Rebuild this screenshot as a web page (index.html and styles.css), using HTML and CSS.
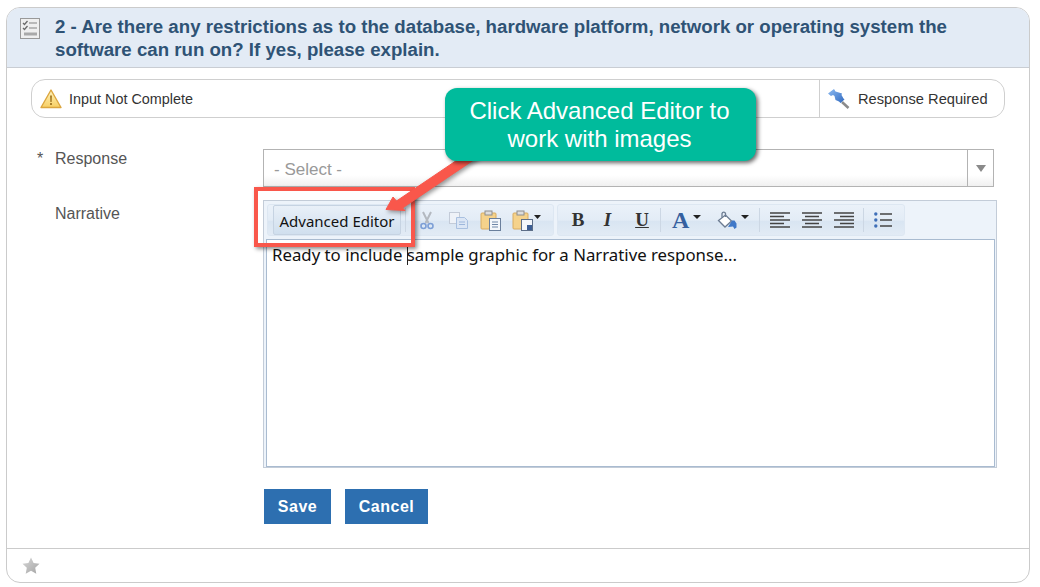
FILE: index.html
```html
<!DOCTYPE html>
<html lang="en">
<head>
<meta charset="utf-8">
<title>Question 2</title>
<link rel="stylesheet" href="styles.css">
</head>
<body>
<div class="page">
  <section class="card">
    <header class="card-head">
      <svg class="head-icon" width="20" height="21" viewBox="0 0 20 21">
        <rect x=".5" y=".5" width="19" height="20" fill="#efefef" stroke="#999"/>
        <path d="M3 5l1.500 1.500L7.500 3M3 10l1.500 1.500L7.500 8" fill="none" stroke="#6a6a6a" stroke-width="1.300"/>
        <path d="M9 5h8M9 10h8" stroke="#a8a8a8" stroke-width="1.500"/>
        <rect x="4" y="14.500" width="13" height="3" fill="#a9a9a9"/>
      </svg>
      <h1 class="title">2 - Are there any restrictions as to the database, hardware platform, network or operating system the software can run on? If yes, please explain.</h1>
    </header>

    <div class="status">
      <div class="status-left">
        <svg width="22" height="20" viewBox="0 0 22 20">
          <defs><linearGradient id="warn" x1="0" y1="0" x2="0" y2="1"><stop offset="0" stop-color="#fff3bd"/><stop offset="1" stop-color="#f7cf64"/></linearGradient></defs>
          <path d="M11 1L21 18.500H1z" fill="url(#warn)" stroke="#dca63f" stroke-width="1.400" stroke-linejoin="round"/>
          <path d="M10 6.500h2l-.3 6.500h-1.400z" fill="#a9802c"/><rect x="10" y="14" width="2" height="2" fill="#a9802c"/>
        </svg>
        <span>Input Not Complete</span>
      </div>
      <div class="status-right">
        <svg width="23" height="21" viewBox="0 0 23 21">
          <defs><linearGradient id="pin" x1="0" y1="0" x2="1" y2="1"><stop offset="0" stop-color="#8fbcf2"/><stop offset="1" stop-color="#2f69c0"/></linearGradient></defs>
          <path d="M15 14l6.500 6" stroke="#8b8b8b" stroke-width="2.600"/>
          <path d="M1 5.500L7 1l1.500 2.500 5 1.500 1.500 .5-.5 1.500 2 3.500 1 1-4 3.500-1.500-1.500-3.500-1.500-1-4-1.500-1-2 1z" fill="url(#pin)"/>
        </svg>
        <span>Response Required</span>
      </div>
    </div>

    <div class="form">
      <div class="row row-response">
        <span class="req">*</span>
        <span class="label">Response</span>
        <div class="select">
          <span class="select-text">- Select -</span>
          <span class="select-btn"><i class="tri"></i></span>
        </div>
      </div>
      <div class="row row-narrative">
        <span class="req"></span>
        <span class="label">Narrative</span>
        <div class="editor">
          <div class="toolbar">
            <div class="tool-group group-a">
              <span class="adv">Advanced Editor</span>
              <i class="sep"></i>
              <span class="tool t-first">
                <svg width="14" height="19" viewBox="0 0 14 19"><path d="M3 1l5.500 11M11 1L5.500 12" stroke="#b4b9c0" stroke-width="2" fill="none"/><circle cx="3.500" cy="15" r="2.500" fill="none" stroke="#7d9fd6" stroke-width="1.600"/><circle cx="10.500" cy="15" r="2.500" fill="none" stroke="#7d9fd6" stroke-width="1.600"/></svg>
              </span>
              <span class="tool">
                <svg width="20" height="17" viewBox="0 0 20 17"><rect x=".5" y=".5" width="10" height="11" fill="#eef2f8" stroke="#c3cbd8"/><path d="M7.500 5.500h8l3 3v8h-11z" fill="#dbe6f5" stroke="#a9c0e0"/><path d="M10 10h6M10 12.500h6" stroke="#9db7dc"/></svg>
              </span>
              <span class="tool">
                <svg width="22" height="21" viewBox="0 0 22 21"><rect x="1" y="3" width="15" height="16" rx="1" fill="#f5d28b" stroke="#d8ac62"/><rect x="5" y="1" width="7" height="4" fill="#ddd" stroke="#8e8e8e"/><rect x="9.500" y="8.500" width="11" height="12" fill="#f4f7fb" stroke="#6a7f9c"/><path d="M12 12h6M12 14.500h6M12 17h6" stroke="#6f87a8"/></svg>
              </span>
              <span class="tool tool-wide">
                <svg width="30" height="21" viewBox="0 0 30 21"><rect x="1" y="3" width="15" height="16" rx="1" fill="#f5d28b" stroke="#d8ac62"/><rect x="5" y="1" width="7" height="4" fill="#ddd" stroke="#8e8e8e"/><rect x="9.500" y="9.500" width="11" height="11" fill="#f4f7fb" stroke="#5d6e88"/><path d="M15 15h5v5h-5z" fill="#3d5f94"/><path d="M22 5h7l-3.500 4z" fill="#222"/></svg>
              </span>
            </div>
            <div class="tool-group group-b">
              <span class="tool glyph g-bold">B</span>
              <span class="tool glyph g-ital">I</span>
              <span class="tool glyph g-under">U</span>
              <i class="sep"></i>
              <span class="tool tool-color">
                <span class="g-color">A</span><i class="caret"></i>
              </span>
              <span class="tool tool-fill">
                <svg width="20" height="18" viewBox="0 0 20 18"><path d="M1.500 9.500L8.500 4l6 6-6.500 6z" fill="#fff" stroke="#6c7c92" stroke-width="1.300"/><path d="M5 6.500V2.500a1.800 1.800 0 0 1 3.500 0V6" fill="none" stroke="#6c7c92" stroke-width="1.300"/><path d="M11 16l4-6.500h2.500l2 3v4l-2 1.500-1.500-2.500z" fill="#3f78c8"/></svg>
                <i class="caret"></i>
              </span>
              <i class="sep"></i>
              <span class="tool align a-first">
                <svg width="20" height="16" viewBox="0 0 20 16"><path d="M0 1h20M0 4.500h14M0 8h20M0 11.500h14M0 15h20" stroke="#444" stroke-width="1.600"/></svg>
              </span>
              <span class="tool align">
                <svg width="20" height="16" viewBox="0 0 20 16"><path d="M0 1h20M3 4.500h14M0 8h20M3 11.500h14M0 15h20" stroke="#444" stroke-width="1.600"/></svg>
              </span>
              <span class="tool align">
                <svg width="20" height="16" viewBox="0 0 20 16"><path d="M0 1h20M6 4.500h14M0 8h20M6 11.500h14M0 15h20" stroke="#444" stroke-width="1.600"/></svg>
              </span>
              <i class="sep sep-c"></i>
              <span class="tool list">
                <svg width="18" height="16" viewBox="0 0 18 16"><path d="M6 2h12M6 8h12M6 14h12" stroke="#444" stroke-width="1.600"/><circle cx="1.800" cy="2" r="1.700" fill="#3f6fb8"/><circle cx="1.800" cy="8" r="1.700" fill="#3f6fb8"/><circle cx="1.800" cy="14" r="1.700" fill="#3f6fb8"/></svg>
              </span>
            </div>
          </div>
          <div class="edit-area">Ready to include <span class="cursor"></span>sample graphic for a Narrative response...</div>
        </div>
      </div>
      <div class="actions">
        <button class="btn btn-save" type="button">Save</button>
        <button class="btn btn-cancel" type="button">Cancel</button>
      </div>
    </div>

    <footer class="card-foot">
      <svg width="18" height="17" viewBox="0 0 18 17">
        <defs><linearGradient id="star" x1="0" y1="0" x2="1" y2="1"><stop offset="0" stop-color="#d8d8d8"/><stop offset="1" stop-color="#a4a4a4"/></linearGradient></defs>
        <path d="M9 .5l2.600 5.400 5.900.8-4.300 4.100 1.100 5.900L9 13.800l-5.300 2.900 1.100-5.900L.5 6.700l5.900-.8z" fill="url(#star)"/>
      </svg>
    </footer>
  </section>

  <div class="highlight"></div>
  <svg class="arrow" width="110" height="70" viewBox="0 0 110 70">
    <path d="M8 59.500L15 47 18.500 51 94 0 100 7 24.500 58 27 60.500z" fill="#f9574b" stroke="#f9574b" stroke-width="1" stroke-linejoin="round"/>
  </svg>
  <div class="callout">Click Advanced Editor to work with images</div>
</div>
</body>
</html>
```
FILE: styles.css
```css
* { box-sizing: border-box; }
html, body { margin: 0; padding: 0; background: #fff; }
body { font-family: "Liberation Sans", Arial, sans-serif; color: #555; overflow: hidden; }
.page { position: relative; width: 1040px; height: 587px; padding: 7px 0 0 6px; }

.card {
  width: 1024px; height: 576px; background: #fff;
  border: 1px solid #cbcbcb; border-radius: 14px; overflow: hidden;
  display: flex; flex-direction: column;
}
.card-head {
  height: 60px; flex: none; background: #e3ebf5; border-bottom: 1px solid #c9cdd3;
  display: flex; padding: 10px 50px 0 13px;
}
.head-icon { flex: none; margin: 0 15px 0 0; }
.title { margin: -2px 0 0; font-size: 18.670px; line-height: 22.500px; font-weight: bold; color: #2f5375; }

.status {
  height: 39px; flex: none; margin: 11px 24px 0 24px;
  border: 1px solid #cfcfcf; border-radius: 14px;
  display: flex; justify-content: space-between; align-items: stretch;
  font-size: 14.670px; color: #333;
}
.status-left { display: flex; align-items: center; gap: 7px; padding-left: 8px; font-size: 14.400px; }
.status-right {
  display: flex; align-items: center; gap: 8px; width: 185px; padding-left: 7px;
  border-left: 1px solid #cfcfcf;
}

.form { flex: 1; display: flex; flex-direction: column; }
.row { display: flex; font-size: 16px; color: #555; }
.req { width: 18px; margin-left: 30px; flex: none; }
.label { width: 208px; flex: none; }
.row-response { margin-top: 31px; height: 38px; }
.row-response .label, .row-response .req { padding-top: 1px; }
.row-narrative { margin-top: 13px; }
.row-narrative .label { padding-top: 5px; }

.select {
  width: 731px; height: 38px; border: 1px solid #b3b3b3;
  background: linear-gradient(#fff 70%, #f0f0f0);
  display: flex; align-items: center; justify-content: space-between;
}
.select-text { padding: 3px 0 0 10px; font-size: 17px; color: #999; }
.select-btn {
  width: 26px; height: 100%; border-left: 1px solid #b3b3b3;
  display: flex; align-items: center; justify-content: center;
}
.tri { width: 0; height: 0; border: 5px solid transparent; border-top: 7px solid #8a8a8a; border-bottom: 0; }

.editor {
  width: 734px; height: 268px; border: 1px solid #c3ccd8; background: #edf3fa;
  display: flex; flex-direction: column; padding: 0 1px 0 2px;
}
.toolbar { height: 38px; flex: none; display: flex; padding: 3px 0 0 1px; gap: 3px; }
.tool-group {
  height: 32px; display: flex; align-items: center;
  border: 1px solid #dde7f2; border-radius: 3px;
  background: linear-gradient(#eaf1f9 0%, #e3ecf6 50%, #d9e5f2 55%, #e2ebf5 100%);
}
.group-a { width: 287px; padding-left: 5px; }
.group-b { width: 348px; padding-left: 5px; }
.adv {
  width: 128px; height: 30px; flex: none; padding-top: 2px;
  display: flex; align-items: center; justify-content: center;
  font-family: "Noto Sans", sans-serif; font-size: 15px; color: #111;
  border: 1px solid #c6d3e2; border-radius: 2px;
  background: linear-gradient(#e9f0f8, #d0dfee);
}
.sep { width: 1px; height: 24px; background: #ccd7e4; flex: none; }
.group-a .sep { margin-left: 4px; }
.tool { display: flex; align-items: center; justify-content: center; flex: none; width: 32px; height: 30px; }
.t-first { margin-left: 5px; }
.tool-wide { width: 40px; }
.glyph { font-family: "Liberation Serif", serif; font-size: 19px; font-weight: bold; color: #333; }
.g-bold { width: 30px; }
.g-ital { width: 29px; font-style: italic; }
.g-under { width: 36px; margin-left: 2px; text-decoration: underline; }
.tool-color { width: 47px; justify-content: flex-start; padding-left: 11px; gap: 4px; }
.g-color { font-family: "Liberation Serif", serif; font-size: 24px; font-weight: bold; color: #35609f; }
.caret { width: 0; height: 0; border: 4px solid transparent; border-top: 4px solid #222; border-bottom: 0; margin-bottom: 6px; }
.tool-fill { width: 51px; justify-content: flex-start; padding-left: 9px; gap: 4px; }
.a-first { margin-left: 4px; }
.sep-c { margin: 0 4px 0 3px; }
.list { width: 30px; }

.edit-area {
  flex: 1; background: #fff; border: 1px solid #a9bbd0;
  padding: 3px 5px; font-family: "Noto Sans", sans-serif; font-size: 16.800px; line-height: 24px; color: #111;
}
.cursor { display: inline-block; width: 1px; height: 20px; background: #222; vertical-align: -4px; margin-right: -1px; }

.actions { display: flex; gap: 14px; margin: 21px 0 0 257px; }
.btn {
  height: 35px; border: 0; border-radius: 0; background: #2d6fb0; color: #fff;
  font-family: "Liberation Sans", Arial, sans-serif; font-size: 16px; font-weight: bold; letter-spacing: .5px; padding: 0;
}
.btn-save { width: 67px; }
.btn-cancel { width: 83px; }

.card-foot {
  height: 34px; flex: none; border-top: 1px solid #cbcbcb;
  display: flex; align-items: center; padding: 0 0 0 15px;
}

.highlight {
  position: absolute; left: 254px; top: 187px; width: 161px; height: 60px;
  border: 4px solid #f9574b; box-shadow: 2px 2px 4px rgba(0,0,0,.45);
}
.arrow { position: absolute; left: 378px; top: 150px; filter: drop-shadow(2px 2px 2px rgba(0,0,0,.4)); }
.callout {
  position: absolute; left: 445px; top: 88px; width: 311px; height: 73px;
  background: #00bb9c; color: #fff; border-radius: 12px;
  box-shadow: 2px 2px 4px rgba(0,0,0,.6);
  padding: 9px 22px 0 20px; text-align: center; font-size: 24px; line-height: 28px;
}
```
